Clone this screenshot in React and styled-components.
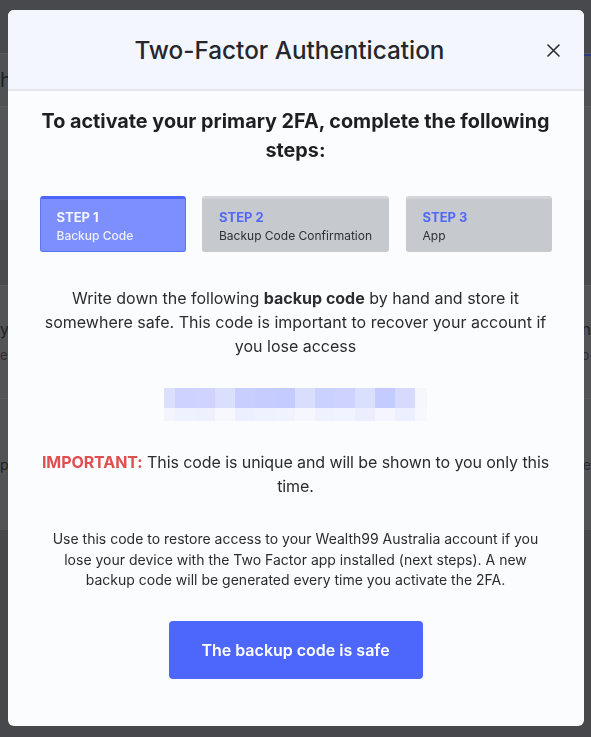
import React from "react";
import styled, { createGlobalStyle } from "styled-components";

const GlobalStyle = createGlobalStyle`
  html, body {
    margin: 0;
    padding: 0;
    background: #47484b;
    font-family: Inter, "Noto Sans", "Liberation Sans", sans-serif;
  }
  * { box-sizing: border-box; }
`;

// dimmed page behind the modal
const Page = styled.div`
  height: 737px;
  overflow: hidden;
  display: flex;
  flex-direction: column;
`;

const Band = styled.div`
  height: ${(p) => p.$h}px;
  background: ${(p) => p.$bg};
  border-top: ${(p) => (p.$line ? `1px solid ${p.$line}` : "none")};
  display: flex;
  justify-content: space-between;
  align-items: center;
  position: relative;
`;

const Underline = styled.div`
  position: absolute;
  right: 0;
  top: 0;
  width: 40px;
  height: 2px;
  background: #2c3a86;
`;

const EdgeText = styled.div`
  color: ${(p) => p.$color || "#1f2022"};
  font-size: ${(p) => p.$size || 16}px;
  line-height: 26px;
  display: flex;
  flex-direction: column;
`;

const Faint = styled.span`
  color: #2c2d30;
  font-size: 13px;
`;

const Mark = styled.div`
  width: 6px;
  height: 10px;
  border-left: 2px solid #7a4b2a;
  margin-left: 16px;
`;

const Backdrop = styled.div`
  position: fixed;
  inset: 0;
  display: flex;
  justify-content: center;
  align-items: flex-start;
  padding-top: 10px;
`;

const Modal = styled.div`
  width: 576px;
  background: #fbfcfe;
  border-radius: 6px;
  overflow: hidden;
  padding-bottom: 47px;
`;

const Header = styled.div`
  height: 81px;
  background: #f4f6fd;
  border-bottom: 2px solid #e4e6eb;
  display: flex;
  align-items: center;
  justify-content: center;
  padding-right: 12px;
  position: relative;
`;

const Title = styled.h2`
  margin: 0;
  font-size: 24.3px;
  font-weight: 500;
  color: #25272b;
`;

const Close = styled.button`
  position: absolute;
  right: 20px;
  top: 30px;
  width: 20px;
  height: 20px;
  border: none;
  background: none;
  padding: 0;
  display: flex;
  align-items: center;
  justify-content: center;
  cursor: pointer;
`;

const Body = styled.div`
  padding: 16px 32px 0;
  display: flex;
  flex-direction: column;
  align-items: center;
  text-align: center;
`;

const Heading = styled.h3`
  margin: 0;
  font-size: 19.8px;
  line-height: 29px;
  font-weight: 700;
  color: #1d1f23;
`;

const Steps = styled.div`
  width: 100%;
  margin-top: 31px;
  display: grid;
  grid-template-columns: 1fr auto 1fr;
  gap: 16.5px;
`;

const Step = styled.div`
  height: 56px;
  border-radius: 3px;
  text-align: left;
  padding: 9px 16px 0;
  background: ${(p) => (p.$active ? "#7c8ffd" : "#c6c9ce")};
  border: 1px solid ${(p) => (p.$active ? "#5a73fd" : "#c6c9ce")};
  border-top: 3px solid ${(p) => (p.$active ? "#4c66fd" : "#d3d5da")};
`;

const StepLabel = styled.div`
  font-size: 13px;
  line-height: 18px;
  font-weight: 700;
  color: ${(p) => (p.$active ? "#f4f5ff" : "#5468f7")};
`;

const StepName = styled.div`
  font-size: 12px;
  line-height: 19px;
  font-weight: ${(p) => (p.$active ? 500 : 400)};
  color: ${(p) => (p.$active ? "#eef0ff" : "#2f3135")};
  white-space: nowrap;
`;

const Text = styled.p`
  margin: ${(p) => p.$mt || 0}px 0 0;
  font-size: ${(p) => p.$size || 16}px;
  line-height: ${(p) => p.$lh || 24}px;
  letter-spacing: ${(p) => p.$ls || 0}px;
  color: #2b2c30;
  max-width: 512px;
`;

const Important = styled.span`
  color: #e04f4f;
  font-weight: 700;
`;

const CodeBlur = styled.div`
  margin-top: 30px;
  display: grid;
  grid-template-rows: 20px 13px;
  grid-auto-flow: column;
  grid-template-columns: 11px repeat(12, 20px) 12px;
`;

const Cell = styled.div`
  background: ${(p) => p.$bg};
`;

const Button = styled.button`
  margin-top: 30px;
  width: 254px;
  height: 58px;
  border: none;
  border-radius: 4px;
  background: #4d67fd;
  color: #ffffff;
  font-family: inherit;
  font-size: 16px;
  font-weight: 600;
  cursor: pointer;
`;

const topRow = [
  "#dcdffe", "#cdd3fe", "#cfd3fe", "#dadffe", "#c8cffe", "#c6ccfe", "#c4cbfe",
  "#dadefe", "#cbd1fe", "#cdd3fe", "#dadffe", "#c4cbfe", "#d6dbfe", "#f6f7fc",
];
const bottomRow = [
  "#f3f4fe", "#eff1fe", "#eef0fe", "#f7f8fe", "#eceffe", "#eff1fe", "#f0f2fe",
  "#f5f6fe", "#eff1fe", "#f1f3fe", "#eceefe", "#f4f5fe", "#eceffe", "#f7f8fd",
];

const steps = [
  { label: "STEP 1", name: "Backup Code", active: true },
  { label: "STEP 2", name: "Backup Code Confirmation" },
  { label: "STEP 3", name: "App" },
];

const App = () => {
  return (
    <>
      <GlobalStyle />
      <Page>
        <Band $h={53} $bg="#48494c" />
        <Band $h={53} $bg="#505154" $line="#5a5b5e">
          <Underline />
          <EdgeText $size={20}>h</EdgeText>
        </Band>
        <Band $h={94} $bg="#545558" $line="#5a5b5e">
          <Mark />
        </Band>
        <Band $h={85} $bg="#4a4b4e" />
        <Band $h={113} $bg="#535457" $line="#5c5d60">
          <EdgeText>
            <span>y</span>
            <Faint>e</Faint>
          </EdgeText>
          <EdgeText>
            <span>n</span>
            <Faint>o</Faint>
          </EdgeText>
        </Band>
        <Band $h={132} $bg="#525356" $line="#5c5d60">
          <EdgeText $size={14}>p</EdgeText>
          <EdgeText $size={14} $color="#2c2d30">
            re
          </EdgeText>
        </Band>
        <Band $h={197} $bg="#47484b" />
      </Page>

      <Backdrop>
        <Modal>
          <Header>
            <Title>Two-Factor Authentication</Title>
            <Close aria-label="Close">
              <svg width="13" height="13" viewBox="0 0 13 13">
                <path
                  d="M1 1 L12 12 M12 1 L1 12"
                  stroke="#2a2c30"
                  strokeWidth="1.6"
                  strokeLinecap="round"
                />
              </svg>
            </Close>
          </Header>
          <Body>
            <Heading>
              To activate your primary 2FA, complete the following steps:
            </Heading>
            <Steps>
              {steps.map((s) => (
                <Step key={s.label} $active={s.active}>
                  <StepLabel $active={s.active}>{s.label}</StepLabel>
                  <StepName $active={s.active}>{s.name}</StepName>
                </Step>
              ))}
            </Steps>
            <Text $mt={34}>
              Write down the following <b>backup code</b> by hand and store it
              somewhere safe. This code is important to recover your account if
              you lose access
            </Text>
            <CodeBlur>
              {topRow.map((c, i) => (
                <React.Fragment key={i}>
                  <Cell $bg={c} />
                  <Cell $bg={bottomRow[i]} />
                </React.Fragment>
              ))}
            </CodeBlur>
            <Text $mt={29} $ls={-0.08}>
              <Important>IMPORTANT:</Important> This code is unique and will be
              shown to you only this time.
            </Text>
            <Text $mt={31} $size={14} $lh={20.5}>
              Use this code to restore access to your Wealth99 Australia account
              if you lose your device with the Two Factor app installed (next
              steps). A new backup code will be generated every time you
              activate the 2FA.
            </Text>
            <Button>The backup code is safe</Button>
          </Body>
        </Modal>
      </Backdrop>
    </>
  );
};

export default App;
